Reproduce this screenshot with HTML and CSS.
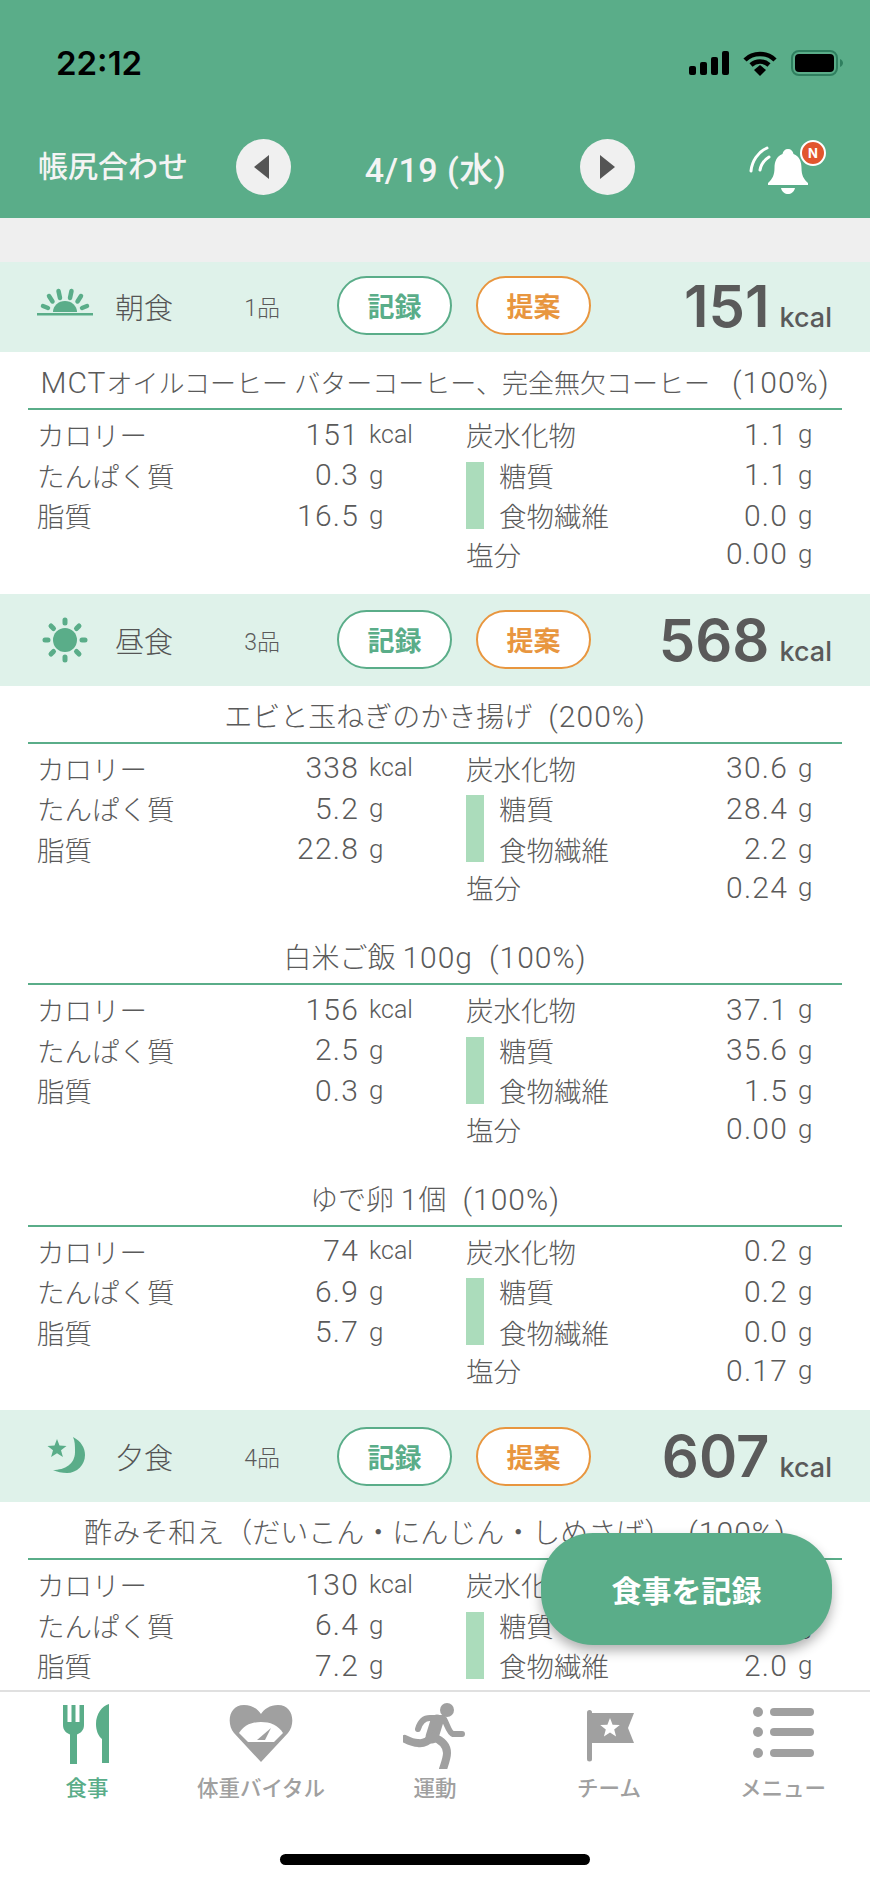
FILE: index.html
```html
<!DOCTYPE html>
<html lang="ja">
<head>
  <meta charset="UTF-8">
  <meta name="viewport" content="width=device-width, initial-scale=1.0">
  <title>食事</title>
  <link rel="stylesheet" href="styles.css">
</head>
<body>
  <div class="app">
    <header class="header">
      <div class="status-bar">
        <span class="time">22:12</span>
        <div class="status-icons">
          <svg width="40" height="24" viewBox="0 0 40 24"><rect x="0" y="15" width="7" height="9" rx="2"/><rect x="11" y="11" width="7" height="13" rx="2"/><rect x="22" y="6" width="7" height="18" rx="2"/><rect x="33" y="0" width="7" height="24" rx="2"/></svg>
          <svg width="36" height="26" viewBox="0 0 36 26"><path d="M18 4c6 0 11 2 15 6" class="wifi-line"/><path d="M3 10c4-4 9-6 15-6" class="wifi-line"/><path d="M9 15c2.500-2.300 5.500-3.500 9-3.500s6.500 1.200 9 3.500" class="wifi-line"/><path d="M12 20l6-5 6 5-6 6z"/></svg>
          <svg width="52" height="26" viewBox="0 0 52 26"><rect x="1" y="1" width="45" height="24" rx="7" class="batt-frame"/><rect x="4" y="4" width="39" height="18" rx="4"/><path d="M49 9c2 1 3 2.500 3 4s-1 3-3 4z" class="batt-cap"/></svg>
        </div>
      </div>
      <nav class="date-nav">
        <h1 class="nav-title">帳尻合わせ</h1>
        <button class="round-btn"><span class="tri tri-left"></span></button>
        <div class="nav-date">4/19 (水)</div>
        <button class="round-btn"><span class="tri tri-right"></span></button>
        <div class="bell">
          <svg width="60" height="48" viewBox="0 0 60 48"><path d="M40 3c3 0 5 2 5.500 5 6 2 8 8 8 14 0 7 2 11 6.500 15v2H20v-2c4.500-4 6.500-8 6.500-15 0-6 2-12 8-14C35 5 37 3 40 3z" fill="#fff"/><path d="M33 42h14c-1 4-4 6-7 6s-6-2-7-6z" fill="#fff"/><path d="M3 25C4 15 10 6 19 2M12 24c1-5 4-10 9-13" class="bell-arc"/></svg>
          <span class="badge">N</span>
        </div>
      </nav>
    </header>

    <main class="content">
      <div class="gap"></div>

      <section class="meal">
        <div class="meal-head meal-head-first">
          <svg class="meal-icon" width="56" height="56" viewBox="0 -11 56 56"><rect x="0" y="24" width="56" height="2.500"/><path d="M16 23a12 11 0 0 1 24 0z"/><path d="M21.500 2l1.500 7M34.500 2L33 9M12 7l3.500 5.500M44 7l-3.500 5.500M6 17l5 2M50 17l-5 2" class="ray"/></svg>
          <span class="meal-name">朝食</span>
          <span class="meal-count">1品</span>
          <button class="pill pill-green">記録</button>
          <button class="pill pill-orange">提案</button>
          <div class="meal-total"><b>151</b><span>kcal</span></div>
        </div>
        <article class="item">
          <h2 class="item-title item-title-fit"><span class="latin">MCT</span>オイルコーヒー バターコーヒー、完全無欠コーヒー<span class="pct">(100%)</span></h2>
          <div class="nutrition">
            <div class="nut-col">
              <div class="nut-row"><span>カロリー</span><span class="num">151</span><span class="unit-kcal">kcal</span></div>
              <div class="nut-row"><span>たんぱく質</span><span class="num">0.3</span><span class="unit">g</span></div>
              <div class="nut-row"><span>脂質</span><span class="num">16.5</span><span class="unit">g</span></div>
            </div>
            <div class="nut-col nut-col-right">
              <div class="nut-row"><span>炭水化物</span><span class="num">1.1</span><span class="unit">g</span></div>
              <div class="nut-sub">
                <div class="nut-sub-rows">
                  <div class="nut-row"><span>糖質</span><span class="num">1.1</span><span class="unit">g</span></div>
                  <div class="nut-row"><span>食物繊維</span><span class="num">0.0</span><span class="unit">g</span></div>
                </div>
              </div>
              <div class="nut-row nut-salt"><span>塩分</span><span class="num">0.00</span><span class="unit">g</span></div>
            </div>
          </div>
        </article>
      </section>

      <section class="meal">
        <div class="meal-head">
          <svg class="meal-icon" width="56" height="56" viewBox="0 0 56 56"><circle cx="28" cy="28" r="12"/><path d="M28 8v3M28 45v3M8 28h3M45 28h3M14 14l2.500 2.500M39.500 39.500L42 42M14 42l2.500-2.500M39.500 16.500L42 14" class="ray ray-sun"/></svg>
          <span class="meal-name">昼食</span>
          <span class="meal-count">3品</span>
          <button class="pill pill-green">記録</button>
          <button class="pill pill-orange">提案</button>
          <div class="meal-total"><b>568</b><span>kcal</span></div>
        </div>
        <article class="item">
          <h2 class="item-title">エビと玉ねぎのかき揚げ<span class="pct">(200%)</span></h2>
          <div class="nutrition">
            <div class="nut-col">
              <div class="nut-row"><span>カロリー</span><span class="num">338</span><span class="unit-kcal">kcal</span></div>
              <div class="nut-row"><span>たんぱく質</span><span class="num">5.2</span><span class="unit">g</span></div>
              <div class="nut-row"><span>脂質</span><span class="num">22.8</span><span class="unit">g</span></div>
            </div>
            <div class="nut-col nut-col-right">
              <div class="nut-row"><span>炭水化物</span><span class="num">30.6</span><span class="unit">g</span></div>
              <div class="nut-sub">
                <div class="nut-sub-rows">
                  <div class="nut-row"><span>糖質</span><span class="num">28.4</span><span class="unit">g</span></div>
                  <div class="nut-row"><span>食物繊維</span><span class="num">2.2</span><span class="unit">g</span></div>
                </div>
              </div>
              <div class="nut-row nut-salt"><span>塩分</span><span class="num">0.24</span><span class="unit">g</span></div>
            </div>
          </div>
        </article>
        <article class="item">
          <h2 class="item-title">白米ご飯 <span class="latin">100g</span><span class="pct">(100%)</span></h2>
          <div class="nutrition">
            <div class="nut-col">
              <div class="nut-row"><span>カロリー</span><span class="num">156</span><span class="unit-kcal">kcal</span></div>
              <div class="nut-row"><span>たんぱく質</span><span class="num">2.5</span><span class="unit">g</span></div>
              <div class="nut-row"><span>脂質</span><span class="num">0.3</span><span class="unit">g</span></div>
            </div>
            <div class="nut-col nut-col-right">
              <div class="nut-row"><span>炭水化物</span><span class="num">37.1</span><span class="unit">g</span></div>
              <div class="nut-sub">
                <div class="nut-sub-rows">
                  <div class="nut-row"><span>糖質</span><span class="num">35.6</span><span class="unit">g</span></div>
                  <div class="nut-row"><span>食物繊維</span><span class="num">1.5</span><span class="unit">g</span></div>
                </div>
              </div>
              <div class="nut-row nut-salt"><span>塩分</span><span class="num">0.00</span><span class="unit">g</span></div>
            </div>
          </div>
        </article>
        <article class="item">
          <h2 class="item-title">ゆで卵 <span class="latin">1</span>個<span class="pct">(100%)</span></h2>
          <div class="nutrition">
            <div class="nut-col">
              <div class="nut-row"><span>カロリー</span><span class="num">74</span><span class="unit-kcal">kcal</span></div>
              <div class="nut-row"><span>たんぱく質</span><span class="num">6.9</span><span class="unit">g</span></div>
              <div class="nut-row"><span>脂質</span><span class="num">5.7</span><span class="unit">g</span></div>
            </div>
            <div class="nut-col nut-col-right">
              <div class="nut-row"><span>炭水化物</span><span class="num">0.2</span><span class="unit">g</span></div>
              <div class="nut-sub">
                <div class="nut-sub-rows">
                  <div class="nut-row"><span>糖質</span><span class="num">0.2</span><span class="unit">g</span></div>
                  <div class="nut-row"><span>食物繊維</span><span class="num">0.0</span><span class="unit">g</span></div>
                </div>
              </div>
              <div class="nut-row nut-salt"><span>塩分</span><span class="num">0.17</span><span class="unit">g</span></div>
            </div>
          </div>
        </article>
      </section>

      <section class="meal">
        <div class="meal-head">
          <svg class="meal-icon" width="56" height="56" viewBox="0 0 56 56"><path d="M36 9C44 13 48 20 48 27C48 37 40 45 30 45C25 45 20 44 16 42C28 42 38 36 38 24C38 18 38 13 36 9z"/><path d="M20 11l2.500 6.600 7 .3-5.500 4.400 1.900 6.800-5.900-3.900-5.900 3.900 1.900-6.800-5.500-4.400 7-.3z"/></svg>
          <span class="meal-name">夕食</span>
          <span class="meal-count">4品</span>
          <button class="pill pill-green">記録</button>
          <button class="pill pill-orange">提案</button>
          <div class="meal-total"><b>607</b><span>kcal</span></div>
        </div>
        <article class="item">
          <h2 class="item-title">酢みそ和え（だいこん・にんじん・しめさば）<span class="pct">(100%)</span></h2>
          <div class="nutrition">
            <div class="nut-col">
              <div class="nut-row"><span>カロリー</span><span class="num">130</span><span class="unit-kcal">kcal</span></div>
              <div class="nut-row"><span>たんぱく質</span><span class="num">6.4</span><span class="unit">g</span></div>
              <div class="nut-row"><span>脂質</span><span class="num">7.2</span><span class="unit">g</span></div>
            </div>
            <div class="nut-col nut-col-right">
              <div class="nut-row"><span>炭水化物</span><span class="num">9.7</span><span class="unit">g</span></div>
              <div class="nut-sub">
                <div class="nut-sub-rows">
                  <div class="nut-row"><span>糖質</span><span class="num">7.7</span><span class="unit">g</span></div>
                  <div class="nut-row"><span>食物繊維</span><span class="num">2.0</span><span class="unit">g</span></div>
                </div>
              </div>
            </div>
          </div>
        </article>
      </section>
    </main>

    <button class="fab">食事を記録</button>

    <footer class="tabbar">
      <div class="tabs">
        <div class="tab tab-active">
          <svg width="64" height="66" viewBox="0 0 64 66"><path d="M8 2h4.500v17h4V2h4v17h4V2H29v20c0 5-3 8-7 9.500V61h-7V31.500C11 30 8 27 8 22z"/><path d="M54 1v59h-7V36c-4-3-6-9-6-15C41 11 47 3 54 1z"/></svg>
          <span>食事</span>
        </div>
        <div class="tab">
          <svg width="64" height="66" viewBox="0 0 64 66"><path d="M32 59L5 30C-3 20 0 2 15 2c8 0 14 4 17 9 3-5 9-9 17-9 15 0 18 18 10 28z"/><path d="M10 30c5-8 13-11 22-11s17 3 22 11l-9 9H19z" class="cut"/><path d="M42 25l-6 12h-8z"/></svg>
          <span>体重バイタル</span>
        </div>
        <div class="tab">
          <svg width="64" height="66" viewBox="0 0 64 66"><circle cx="44" cy="7" r="7"/><path d="M15 26c2-7 6-11 12-11h13M41 16c3 5 5 14 9 15h9" class="run run-arm"/><path d="M34 18L29 34" class="run run-torso"/><path d="M30 32c-3 6-10 9-15 8-5 0-9-2-13-4" class="run"/><path d="M30 34c8 3 14 8 14 16 0 5-2 10-4 16" class="run"/></svg>
          <span>運動</span>
        </div>
        <div class="tab">
          <svg width="64" height="66" viewBox="0 0 64 66"><path d="M10 9.500a2.500 2.500 0 0 1 5 0V56a2.500 2.500 0 0 1-5 0z"/><path d="M13 10h44l-6 15 6 15H13z"/><path d="M33 15l2.600 6.800 7.200.3-5.600 4.500 1.900 7-6.100-4-6.100 4 1.900-7-5.600-4.500 7.200-.3z" class="cut"/></svg>
          <span>チーム</span>
        </div>
        <div class="tab">
          <svg width="64" height="66" viewBox="0 0 64 66"><circle cx="7" cy="9" r="5"/><circle cx="7" cy="29" r="5"/><circle cx="7" cy="50" r="5"/><rect x="19" y="5" width="44" height="8" rx="4"/><rect x="19" y="25" width="44" height="8" rx="4"/><rect x="19" y="46" width="44" height="8" rx="4"/></svg>
          <span>メニュー</span>
        </div>
      </div>
      <div class="home-indicator"></div>
    </footer>
  </div>
</body>
</html>
```

FILE: styles.css
```css
* {
  box-sizing: border-box;
  margin: 0;
  padding: 0;
}

body {
  font-family: Roboto, "Noto Sans CJK JP", sans-serif;
  background: #fff;
  color: #5a5a5a;
}

button {
  font-family: inherit;
  border: none;
  background: none;
}

.app {
  position: relative;
  width: 870px;
  height: 1884px;
  display: flex;
  flex-direction: column;
  overflow: hidden;
}

/* header */
.header {
  height: 218px;
  flex-shrink: 0;
  background: #5aad89;
}

.status-bar {
  height: 126px;
  padding: 45px 27px 0 56px;
  display: flex;
  justify-content: space-between;
  align-items: flex-start;
}

.time {
  font-family: Inter, sans-serif;
  font-size: 33px;
  font-weight: 600;
  line-height: 36px;
  color: #000;
}

.status-icons {
  display: flex;
  align-items: center;
  gap: 13px;
  height: 36px;
}

.wifi-line {
  fill: none;
  stroke: #000;
  stroke-width: 4.5;
}

.batt-frame {
  fill: none;
  stroke: #2f7f5f;
  stroke-width: 2;
}

.batt-cap {
  fill: #2f7f5f;
}

.date-nav {
  height: 56px;
  margin-top: 13px;
  padding-left: 38px;
  display: flex;
  align-items: center;
  color: #f4f4f4;
}

.nav-title {
  width: 198px;
  font-size: 30px;
  font-weight: 500;
  line-height: 40px;
}

.round-btn {
  width: 55px;
  height: 56px;
  border-radius: 50%;
  background: #f0f0f0;
  display: flex;
  align-items: center;
  justify-content: center;
}

.tri {
  width: 0;
  height: 0;
  border-top: 12px solid transparent;
  border-bottom: 12px solid transparent;
}

.tri-left {
  border-right: 15px solid #555;
  margin-right: 5px;
}

.tri-right {
  border-left: 15px solid #555;
}

.nav-date {
  width: 289px;
  text-align: center;
  font-size: 34px;
  font-weight: 500;
  letter-spacing: 0.5px;
}

.bell {
  position: relative;
  width: 60px;
  height: 48px;
  margin-left: 113px;
  margin-top: 6px;
}

.bell svg {
  display: block;
}

.bell-arc {
  fill: none;
  stroke: #fff;
  stroke-width: 3;
  stroke-linecap: round;
}

.badge {
  position: absolute;
  left: 52px;
  top: -6px;
  width: 26px;
  height: 26px;
  border-radius: 50%;
  border: 2px solid #fff;
  background: #e2562e;
  color: #fff;
  font-family: Inter, sans-serif;
  font-size: 13px;
  font-weight: 700;
  line-height: 22px;
  text-align: center;
}

/* content */
.content {
  flex: 1;
  min-height: 0;
  overflow: hidden;
}

.gap {
  height: 44px;
  background: #efefef;
}

.meal-head {
  height: 92px;
  padding: 0 38px 0 37px;
  display: flex;
  align-items: center;
  background: #dff2ea;
}

.meal-head-first {
  height: 90px;
  padding-bottom: 3px;
}

.meal-icon {
  fill: #5aad89;
  flex-shrink: 0;
}

.ray {
  fill: none;
  stroke: #5aad89;
  stroke-width: 4.5;
  stroke-linecap: round;
}

.ray-sun {
  stroke-width: 5;
}

.meal-name {
  width: 60px;
  margin-left: 22px;
  font-size: 29px;
  font-weight: 300;
  color: #555;
}

.meal-count {
  width: 105px;
  text-align: right;
  font-size: 23px;
  font-weight: 300;
}

.pill {
  width: 115px;
  height: 59px;
  border-radius: 30px;
  border: 2.5px solid;
  background: #fff;
  font-size: 27px;
  font-weight: 700;
}

.pill-green {
  margin-left: 57px;
  color: #5aad89;
  border-color: #5aad89;
}

.pill-orange {
  margin-left: 24px;
  color: #e8963f;
  border-color: #e8963f;
}

.meal-total {
  margin-left: auto;
  display: flex;
  align-items: baseline;
  gap: 10px;
  font-family: Inter, sans-serif;
  color: #5a5a5a;
}

.meal-total b {
  font-size: 58px;
  font-weight: 600;
}

.meal-total span {
  font-size: 27px;
  font-weight: 500;
}

/* one food */
.item {
  height: 241.5px;
  padding: 0 28px;
}

.item-title {
  height: 58px;
  padding-top: 11px;
  border-bottom: 2px solid #5aad89;
  text-align: center;
  font-size: 28px;
  font-weight: 300;
  line-height: 40px;
  white-space: nowrap;
}

.item-title-fit {
  font-size: 26px;
}

.latin,
.pct {
  font-size: 30px;
  letter-spacing: 1px;
}

.pct {
  margin-left: 16px;
}

.item-title-fit .pct {
  margin-left: 22px;
}

.nutrition {
  margin-top: 4px;
  padding-left: 9px;
  display: flex;
}

.nut-col {
  width: 429px;
  padding-right: 50px;
  flex-shrink: 0;
}

.nut-col-right {
  width: 344px;
  padding-right: 0;
}

.nut-row {
  height: 40.5px;
  display: grid;
  align-items: center;
  font-size: 27.5px;
  font-weight: 300;
  white-space: nowrap;
}

.nut-col .nut-row {
  grid-template-columns: 1fr auto 57px;
}

.nut-col-right .nut-row {
  grid-template-columns: 1fr auto 22px;
}

.num {
  text-align: right;
  font-size: 30px;
  letter-spacing: 1.2px;
}

.unit,
.unit-kcal {
  padding-left: 10px;
  white-space: nowrap;
}

.unit {
  font-size: 26px;
}

.unit-kcal {
  font-size: 25px;
}

.nut-sub {
  display: flex;
  align-items: center;
  gap: 15px;
}

.nut-sub::before {
  content: "";
  width: 18px;
  height: 67px;
  flex-shrink: 0;
  background: #abdcbb;
}

.nut-sub-rows {
  flex: 1;
}

.nut-salt {
  margin-top: -2px;
}

/* floating button */
.fab {
  position: absolute;
  left: 541px;
  top: 1533px;
  width: 291px;
  height: 112px;
  border-radius: 52px;
  background: #5aad89;
  color: #fff;
  font-size: 30px;
  font-weight: 600;
  box-shadow: 0 6px 12px rgba(0, 0, 0, 0.3);
}

/* bottom bar */
.tabbar {
  height: 194px;
  flex-shrink: 0;
  border-top: 2px solid #e0e0e0;
  background: #fff;
  padding-top: 11px;
}

.tabs {
  display: grid;
  grid-template-columns: repeat(5, 174px);
}

.tab {
  display: flex;
  flex-direction: column;
  align-items: center;
  font-size: 21.5px;
  font-weight: 500;
  line-height: 30px;
  color: #a0a0a0;
  white-space: nowrap;
}

.tab svg {
  fill: #a0a0a0;
  margin-bottom: 5px;
}

.tab-active {
  color: #5aad89;
}

.tab-active svg {
  fill: #5aad89;
}

.tab svg .cut {
  fill: #fff;
}

.run {
  fill: none;
  stroke: #a0a0a0;
  stroke-width: 8;
  stroke-linecap: round;
  stroke-linejoin: round;
}

.run-arm {
  stroke-width: 6;
}

.run-torso {
  stroke-width: 13;
}

.home-indicator {
  width: 310px;
  height: 11px;
  margin: 50px auto 0;
  border-radius: 6px;
  background: #000;
}
```
